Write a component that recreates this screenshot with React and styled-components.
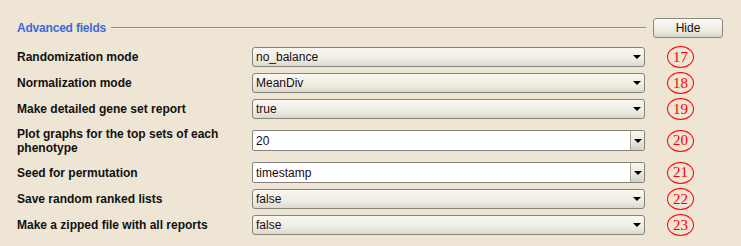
import styled, { createGlobalStyle } from 'styled-components';

const GlobalStyle = createGlobalStyle`
  html, body {
    margin: 0;
    padding: 0;
    background: #eee5d5;
  }
  body {
    font-family: "Liberation Sans", Arial, sans-serif;
    font-size: 12px;
    color: #1a0a14;
  }
`;

const Panel = styled.div`
  width: 741px;
  height: 246px;
  box-sizing: border-box;
  padding: 18px 0 0 17px;
  background: #eee5d5;
`;

const Header = styled.div`
  display: flex;
  align-items: center;
  height: 20px;
  width: 706px;
  margin-bottom: 9px;
`;

const Title = styled.span`
  color: #3a6cd4;
  font-size: 12px;
  font-weight: bold;
  letter-spacing: -0.2px;
`;

const Rule = styled.div`
  flex: 1;
  height: 1px;
  margin: 0 7px 0 5px;
  background: #8c8a86;
  border-bottom: 1px solid #f6f1e8;
`;

const HideButton = styled.button`
  width: 70px;
  height: 20px;
  padding: 0;
  border: 1px solid #8a8880;
  border-radius: 3px;
  background: linear-gradient(#fbfaf6, #ebe9df 70%, #d6d3c6);
  font-family: "Liberation Sans", Arial, sans-serif;
  font-size: 12px;
  color: #111;
`;

const Rows = styled.div`
  display: grid;
  grid-template-columns: 235px 393px 49px;
  row-gap: 6px;
  align-items: center;
`;

const Label = styled.div`
  font-weight: bold;
  font-size: 12px;
  line-height: 14px;
  color: #111;
  min-height: ${p => (p.$tall ? '31px' : '20px')};
  display: flex;
  align-items: center;
  padding-right: 20px;
`;

const Select = styled.div`
  position: relative;
  height: 20px;
  box-sizing: border-box;
  border: 1px solid #85837d;
  border-radius: 3px;
  background: linear-gradient(#f8f7f1, #efede3 60%, #dcd9cb);
  display: flex;
  align-items: center;
  padding-left: 3px;
`;

const Combo = styled.div`
  display: flex;
  height: 21px;
  box-sizing: border-box;
  border: 1px solid #85837d;
  border-radius: 2px;
  background: #fff;
`;

const ComboText = styled.div`
  flex: 1;
  display: flex;
  align-items: center;
  padding-left: 3px;
`;

const ComboButton = styled.div`
  width: 13px;
  border-left: 1px solid #a6a49c;
  border-radius: 0 2px 2px 0;
  background: linear-gradient(#f8f7f1, #e8e6dc 60%, #d4d1c3);
  display: flex;
  align-items: center;
  justify-content: center;
`;

const Arrow = styled.span`
  width: 0;
  height: 0;
  border-left: 4px solid transparent;
  border-right: 4px solid transparent;
  border-top: 4px solid #000;
  ${p => p.$inSelect && `position: absolute; right: 3px; top: 7px;`}
`;

const Badge = styled.div`
  justify-self: start;
  margin: -1px 0 -1px 22px;
  width: 27px;
  height: 22px;
  box-sizing: border-box;
  border: 1.5px solid #f00;
  border-radius: 50%;
  display: flex;
  align-items: center;
  justify-content: center;
  color: #f00;
  font-family: "Liberation Serif", "Times New Roman", serif;
  font-size: 15px;
  line-height: 1;
`;

const fields = [
  { label: 'Randomization mode', value: 'no_balance', n: 17 },
  { label: 'Normalization mode', value: 'MeanDiv', n: 18 },
  { label: 'Make detailed gene set report', value: 'true', n: 19 },
  { label: 'Plot graphs for the top sets of each phenotype', value: '20', n: 20, combo: true, tall: true },
  { label: 'Seed for permutation', value: 'timestamp', n: 21, combo: true },
  { label: 'Save random ranked lists', value: 'false', n: 22 },
  { label: 'Make a zipped file with all reports', value: 'false', n: 23 },
];

export default function App() {
  return (
    <Panel>
      <GlobalStyle />
      <Header>
        <Title>Advanced fields</Title>
        <Rule />
        <HideButton>Hide</HideButton>
      </Header>
      <Rows>
        {fields.map(f => [
          <Label key={f.n + 'l'} $tall={f.tall}>{f.label}</Label>,
          f.combo ? (
            <Combo key={f.n + 'f'}>
              <ComboText>{f.value}</ComboText>
              <ComboButton><Arrow /></ComboButton>
            </Combo>
          ) : (
            <Select key={f.n + 'f'}>
              {f.value}
              <Arrow $inSelect />
            </Select>
          ),
          <Badge key={f.n + 'b'}>{f.n}</Badge>,
        ])}
      </Rows>
    </Panel>
  );
}
